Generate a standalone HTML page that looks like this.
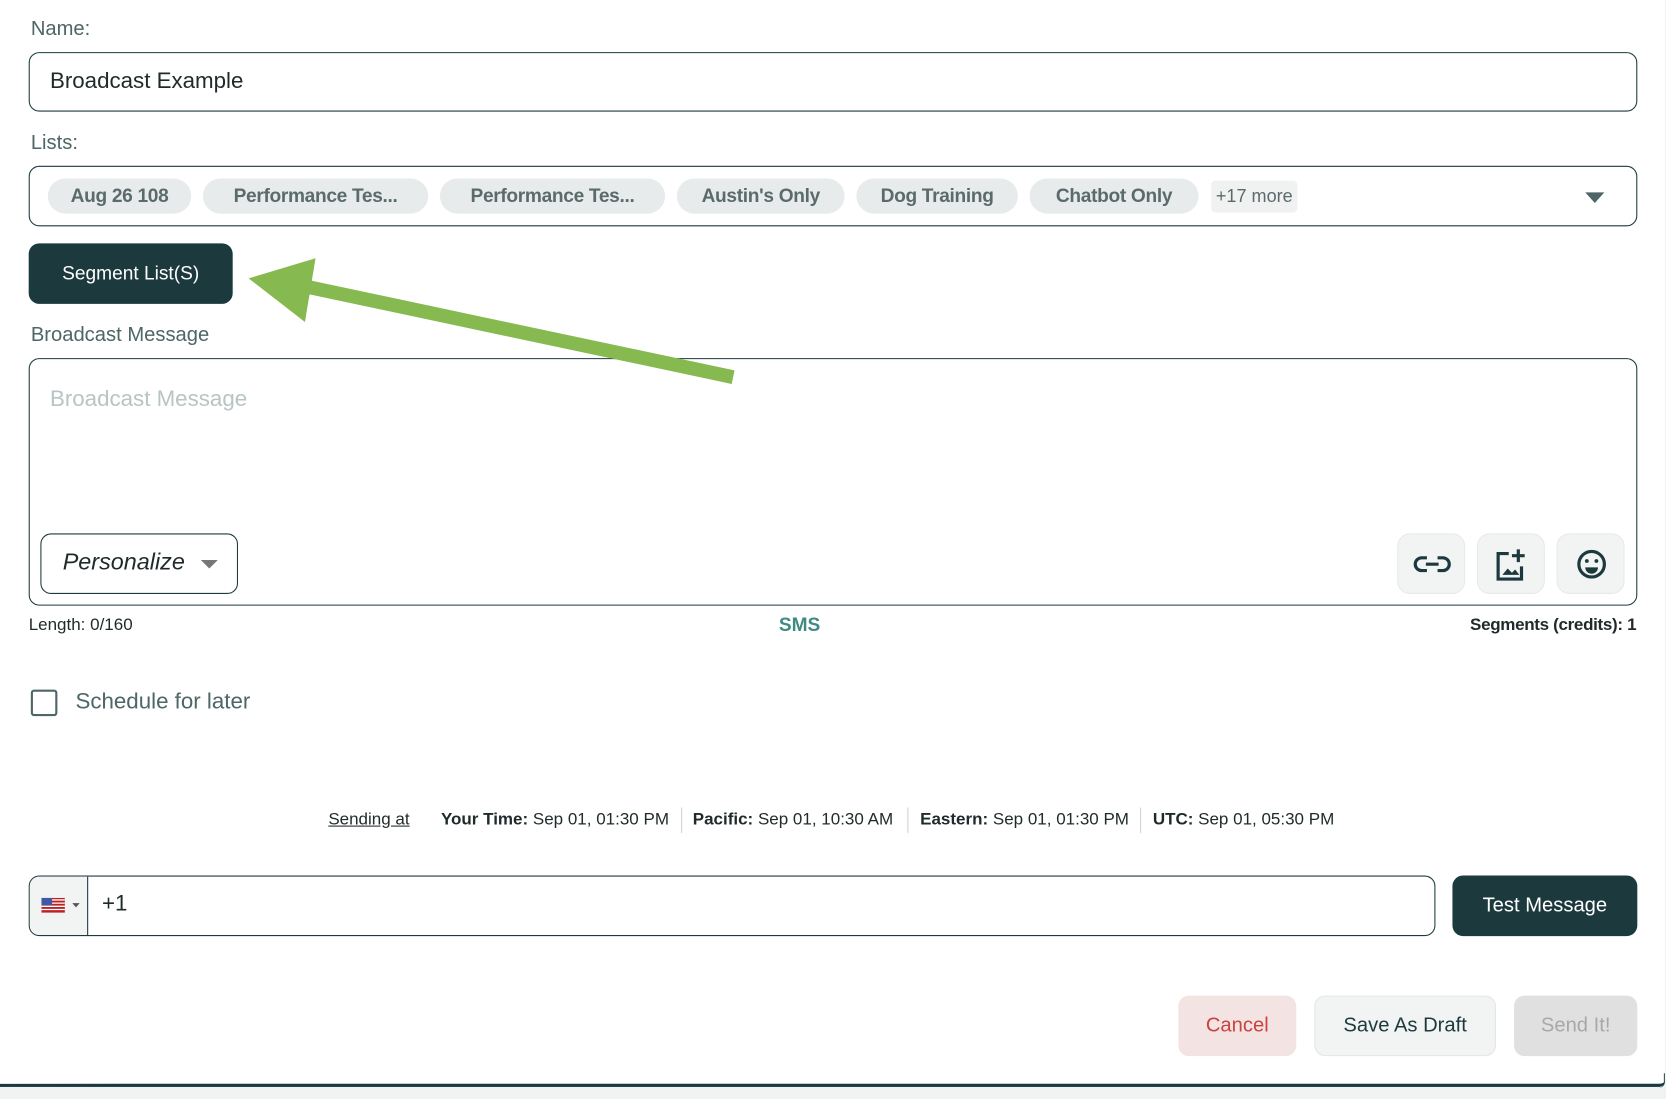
<!DOCTYPE html>
<html><head><meta charset="utf-8"><style>
*{box-sizing:border-box;margin:0;padding:0}
body{width:1666px;height:1098px;background:#f1f3f2;font-family:"Liberation Sans",sans-serif;position:relative;overflow:hidden;color:#1c3a3e}
#w{position:absolute;left:0;top:0;width:1568px;height:1034px;transform:scale(1.0625);transform-origin:0 0}
.card{position:absolute;left:0;top:0;width:1567px;height:1023px;background:#fff;border-bottom:3px solid #1c3a3e;border-bottom-right-radius:6px}
.abs{position:absolute}
.lbl{color:#4e6666;font-size:19px}
.box{position:absolute;border:1.5px solid #1c3a3e;border-radius:10px;background:#fff}
.chip{position:absolute;top:168px;height:33px;border-radius:17px;background:#e8ebeb;color:#5b6b6b;font-weight:bold;font-size:18px;line-height:33px;text-align:center;letter-spacing:-0.3px}
.ib{position:absolute;top:502px;width:64px;height:57px;border-radius:12px;background:#f2f3f3;border:1px solid #e8eaea}
.btn{position:absolute;border-radius:10px;font-size:19px;text-align:center}
.tm{font-size:16px;color:#1f2a2a;top:763px}
.sep{position:absolute;top:760px;width:1px;height:24px;background:#d0d4d4}
</style></head><body><div id="w">
<div class="card"></div>
<div class="abs" style="left:1560px;top:1010px;width:7px;height:14px;border-right:1.5px solid #1c3a3e;border-bottom-right-radius:6px"></div>
<div class="abs lbl" style="left:29px;top:17px">Name:</div>
<div class="box" style="left:27px;top:49px;width:1514px;height:56px"></div>
<div class="abs" style="left:47px;top:65px;font-size:21px;color:#1f2a2a">Broadcast Example</div>
<div class="abs lbl" style="left:29px;top:124px">Lists:</div>
<div class="box" style="left:27px;top:156px;width:1514px;height:57px"></div>
<div class="chip" style="left:45px;width:135px">Aug 26 108</div>
<div class="chip" style="left:191px;width:212px">Performance Tes...</div>
<div class="chip" style="left:414px;width:212px">Performance Tes...</div>
<div class="chip" style="left:637px;width:158px">Austin's Only</div>
<div class="chip" style="left:806px;width:152px">Dog Training</div>
<div class="chip" style="left:969px;width:159px">Chatbot Only</div>
<div class="abs" style="left:1140px;top:170px;width:81px;height:30px;background:#f0f1f1;border-radius:4px;color:#5b6b6b;font-size:17px;line-height:30px;text-align:center">+17 more</div>
<svg class="abs" style="left:1492px;top:180px" width="18" height="12"><path d="M0 1h18L9 11z" fill="#4f6466"/></svg>
<div class="btn" style="left:27px;top:229px;width:192px;height:57px;background:#1c3a3e;color:#fff;font-size:18px;line-height:57px">Segment List(S)</div>
<div class="abs lbl" style="left:29px;top:305px">Broadcast Message</div>
<div class="box" style="left:27px;top:337px;width:1514px;height:233px"></div>
<svg class="abs" style="left:0;top:0" width="800" height="400"><line x1="690" y1="355" x2="280" y2="268" stroke="#86b94f" stroke-width="13"/><path d="M234 262L297 243L287 303z" fill="#86b94f"/></svg>
<div class="abs" style="left:47px;top:364px;font-size:21px;color:#b9c4c4">Broadcast Message</div>
<div class="abs" style="left:38px;top:502px;width:186px;height:57px;border:1.5px solid #1c3a3e;border-radius:10px"></div>
<div class="abs" style="left:59px;top:516px;font-size:22px;font-style:italic;color:#1f2a2a">Personalize</div>
<svg class="abs" style="left:189px;top:526px" width="16" height="10"><path d="M0 1h16L8 9z" fill="#777"/></svg>
<div class="ib" style="left:1315px"><svg width="64" height="57" viewBox="0 0 64 57"><path d="M27 22h-5a6 6 0 0 0 0 12h5M37 22h5a6 6 0 0 1 0 12h-5M26 28h12" fill="none" stroke="#1c3a3e" stroke-width="3"/></svg></div>
<div class="ib" style="left:1390px"><svg width="64" height="57" viewBox="0 0 64 57"><path d="M29 18h-10v24h22v-12" fill="none" stroke="#1c3a3e" stroke-width="3"/><path d="M38 14v12M32 20h12" stroke="#1c3a3e" stroke-width="3"/><path d="M23 38l5-6 4 4 3-3 4 5z" fill="#1c3a3e"/></svg></div>
<div class="ib" style="left:1465px"><svg width="64" height="57" viewBox="0 0 64 57"><circle cx="32" cy="28" r="12" fill="none" stroke="#1c3a3e" stroke-width="3"/><circle cx="27.5" cy="25" r="1.8" fill="#1c3a3e"/><circle cx="36.5" cy="25" r="1.8" fill="#1c3a3e"/><path d="M26 31h12a6 6 0 0 1-12 0z" fill="#1c3a3e"/></svg></div>
<div class="abs" style="left:27px;top:580px;font-size:16px;color:#1f2a2a">Length: 0/160</div>
<div class="abs" style="left:733px;top:578px;font-size:18px;font-weight:bold;color:#3f8b84">SMS</div>
<div class="abs" style="right:28px;top:580px;font-size:16px;font-weight:bold;color:#1f2a2a;letter-spacing:-0.3px">Segments (credits): 1</div>
<div class="abs" style="left:29px;top:649px;width:25px;height:25px;border:2.5px solid #4e6666;border-radius:3px"></div>
<div class="abs" style="left:71px;top:649px;font-size:21px;color:#4e6666">Schedule for later</div>
<div class="abs tm" style="left:309px;text-decoration:underline">Sending at</div>
<div class="abs tm" style="left:415px"><b>Your Time:</b> Sep 01, 01:30 PM</div>
<div class="sep" style="left:641px"></div>
<div class="abs tm" style="left:652px"><b>Pacific:</b> Sep 01, 10:30 AM</div>
<div class="sep" style="left:854px"></div>
<div class="abs tm" style="left:866px"><b>Eastern:</b> Sep 01, 01:30 PM</div>
<div class="sep" style="left:1073px"></div>
<div class="abs tm" style="left:1085px"><b>UTC:</b> Sep 01, 05:30 PM</div>
<div class="box" style="left:27px;top:824px;width:1324px;height:57px;overflow:hidden"><div style="position:absolute;left:0;top:0;width:55px;height:100%;background:#f2f3f3;border-right:1.5px solid #1c3a3e"></div></div>
<svg class="abs" style="left:39px;top:845px" width="38" height="14"><rect width="22" height="14" fill="#b22"/><path d="M0 2h22M0 5h22M0 8h22M0 11h22" stroke="#fff" stroke-width="1.2"/><rect width="10" height="7" fill="#3c5aa6"/><path d="M29 5h7l-3.5 4z" fill="#555"/></svg>
<div class="abs" style="left:96px;top:839px;font-size:21px;color:#1f2a2a">+1</div>
<div class="btn" style="left:1367px;top:824px;width:174px;height:57px;background:#1c3a3e;color:#fff;line-height:57px">Test Message</div>
<div class="btn" style="left:1109px;top:937px;width:111px;height:57px;background:#f4e3e3;color:#c9443f;line-height:57px">Cancel</div>
<div class="btn" style="left:1237px;top:937px;width:171px;height:57px;background:#f2f3f3;border:1px solid #e3e6e6;color:#1c3a3e;line-height:55px">Save As Draft</div>
<div class="btn" style="left:1425px;top:937px;width:116px;height:57px;background:#e0e0e0;color:#a8a8a8;line-height:57px">Send It!</div>
</div></body></html>
